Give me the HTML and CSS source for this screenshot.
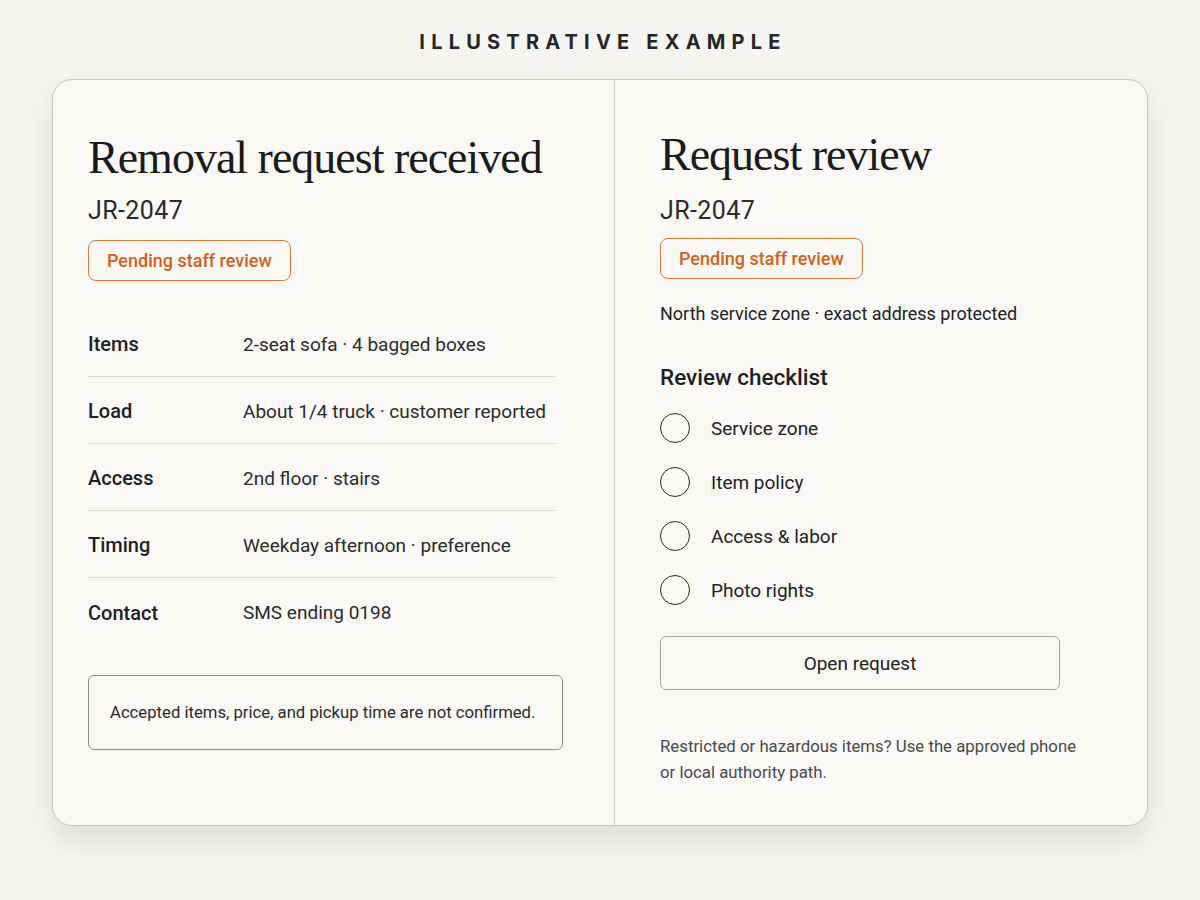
FILE: index.html
```html
<!DOCTYPE html>
<html lang="en">
<head>
  <meta charset="UTF-8" />
  <title>Removal request</title>
  <link rel="stylesheet" href="styles.css">
</head>
<body>
  <div class="eyebrow">Illustrative example</div>

  <div class="card">
    <!-- customer side -->
    <section class="panel panel-left">
      <h1 class="heading">Removal request received</h1>
      <div class="ref">JR-2047</div>
      <span class="badge">Pending staff review</span>

      <dl class="details">
        <div class="row"><dt>Items</dt><dd>2-seat sofa · 4 bagged boxes</dd></div>
        <div class="row"><dt>Load</dt><dd>About 1/4 truck · customer reported</dd></div>
        <div class="row"><dt>Access</dt><dd>2nd floor · stairs</dd></div>
        <div class="row"><dt>Timing</dt><dd>Weekday afternoon · preference</dd></div>
        <div class="row"><dt>Contact</dt><dd>SMS ending 0198</dd></div>
      </dl>

      <div class="note">Accepted items, price, and pickup time are not confirmed.</div>
    </section>

    <!-- staff side -->
    <section class="panel panel-right">
      <h1 class="heading">Request review</h1>
      <div class="ref">JR-2047</div>
      <span class="badge">Pending staff review</span>
      <p class="zone">North service zone · exact address protected</p>

      <h2 class="checklist-title">Review checklist</h2>
      <ul class="checklist">
        <li><span class="circle"></span>Service zone</li>
        <li><span class="circle"></span>Item policy</li>
        <li><span class="circle"></span>Access &amp; labor</li>
        <li><span class="circle"></span>Photo rights</li>
      </ul>

      <button type="button" class="open-btn">Open request</button>

      <p class="footnote">Restricted or hazardous items? Use the approved phone<br>or local authority path.</p>
    </section>
  </div>
</body>
</html>
```

FILE: styles.css
```css
body {
  margin: 0;
  min-height: 100vh;
  padding-bottom: 60px;
  box-sizing: border-box;
  background-color: #f6f5f1;
  font-family: Roboto, 'Liberation Sans', sans-serif;
  color: #222;
}

.eyebrow {
  text-align: center;
  text-transform: uppercase;
  font-family: Inter, 'Liberation Sans', sans-serif;
  font-weight: 700;
  font-size: 20px;
  line-height: 24px;
  letter-spacing: 6.2px;
  padding-left: 6px;
  color: #262626;
  padding-top: 30px;
  height: 79px;
  box-sizing: border-box;
}

.card {
  width: 1096px;
  height: 747px;
  margin: 0 auto;
  box-sizing: border-box;
  display: grid;
  grid-template-columns: 562px 1fr;
  background-color: #f9f8f5;
  border: 1px solid #c8c6c1;
  border-radius: 20px;
  box-shadow: 0 14px 30px rgba(0, 0, 0, 0.10);
}

.panel {
  display: flex;
  flex-direction: column;
  align-items: flex-start;
}

.panel-left {
  padding: 50px 50px 0 35px;
  border-right: 1px solid #cfcdc8;
}

.panel-right {
  padding: 47px 40px 0 45px;
}

.heading {
  margin: 0;
  font-family: 'Liberation Serif', serif;
  font-weight: 400;
  font-size: 46px;
  line-height: 56px;
  letter-spacing: -1px;
  white-space: nowrap;
  color: #1b1b1b;
}

.ref {
  margin-top: 10px;
  font-size: 25px;
  line-height: 30px;
  letter-spacing: 0.4px;
  color: #2a2a2a;
}

.panel-right .ref {
  margin-top: 13px;
}

.badge {
  margin-top: 14px;
  padding: 0 18px;
  height: 41px;
  line-height: 39px;
  box-sizing: border-box;
  border: 1.5px solid #dc7a3c;
  border-radius: 8px;
  color: #d2601b;
  font-size: 18px;
  font-weight: 500;
}

.panel-right .badge {
  margin-top: 12px;
}

.details {
  margin: 39px 0 0;
  width: 468px;
}

.row {
  display: flex;
  align-items: center;
  height: 67px;
  padding-top: 2px;
  box-sizing: border-box;
  border-bottom: 1px solid #dedcd7;
  font-size: 19px;
}

.row:first-child {
  margin-top: -10px;
}

.row:last-child {
  border-bottom: none;
}

.row dt {
  width: 155px;
  font-weight: 500;
  font-size: 20px;
  color: #1f1f1f;
}

.row dd {
  margin: 0;
  color: #2b2b2b;
}

.note {
  margin-top: 30px;
  width: 475px;
  height: 75px;
  box-sizing: border-box;
  padding: 0 18px 0 21px;
  display: flex;
  align-items: center;
  border: 1.5px solid #8d8c89;
  border-radius: 6px;
  font-size: 16.7px;
  white-space: nowrap;
  color: #2b2b2b;
}

.zone {
  margin: 24px 0 0;
  font-size: 18px;
  color: #222;
}

.checklist-title {
  margin: 40px 0 0;
  font-size: 22.5px;
  font-weight: 500;
  color: #1f1f1f;
}

.checklist {
  list-style: none;
  margin: 23px 0 0;
  padding: 0;
  display: flex;
  flex-direction: column;
  gap: 24px;
}

.checklist li {
  display: flex;
  align-items: center;
  gap: 21px;
  font-size: 19px;
  color: #222;
}

.circle {
  width: 28px;
  height: 28px;
  border: 1.5px solid #2a2a2a;
  border-radius: 50%;
}

.open-btn {
  margin-top: 31px;
  width: 400px;
  height: 54px;
  background-color: #f9f8f5;
  border: 1.5px solid #a9a7a3;
  border-radius: 6px;
  font-family: Roboto, 'Liberation Sans', sans-serif;
  font-size: 19px;
  color: #222;
  cursor: pointer;
}

.footnote {
  margin: 43px 0 0;
  font-size: 16.8px;
  line-height: 26px;
  white-space: nowrap;
  color: #4a4a4a;
}
```
